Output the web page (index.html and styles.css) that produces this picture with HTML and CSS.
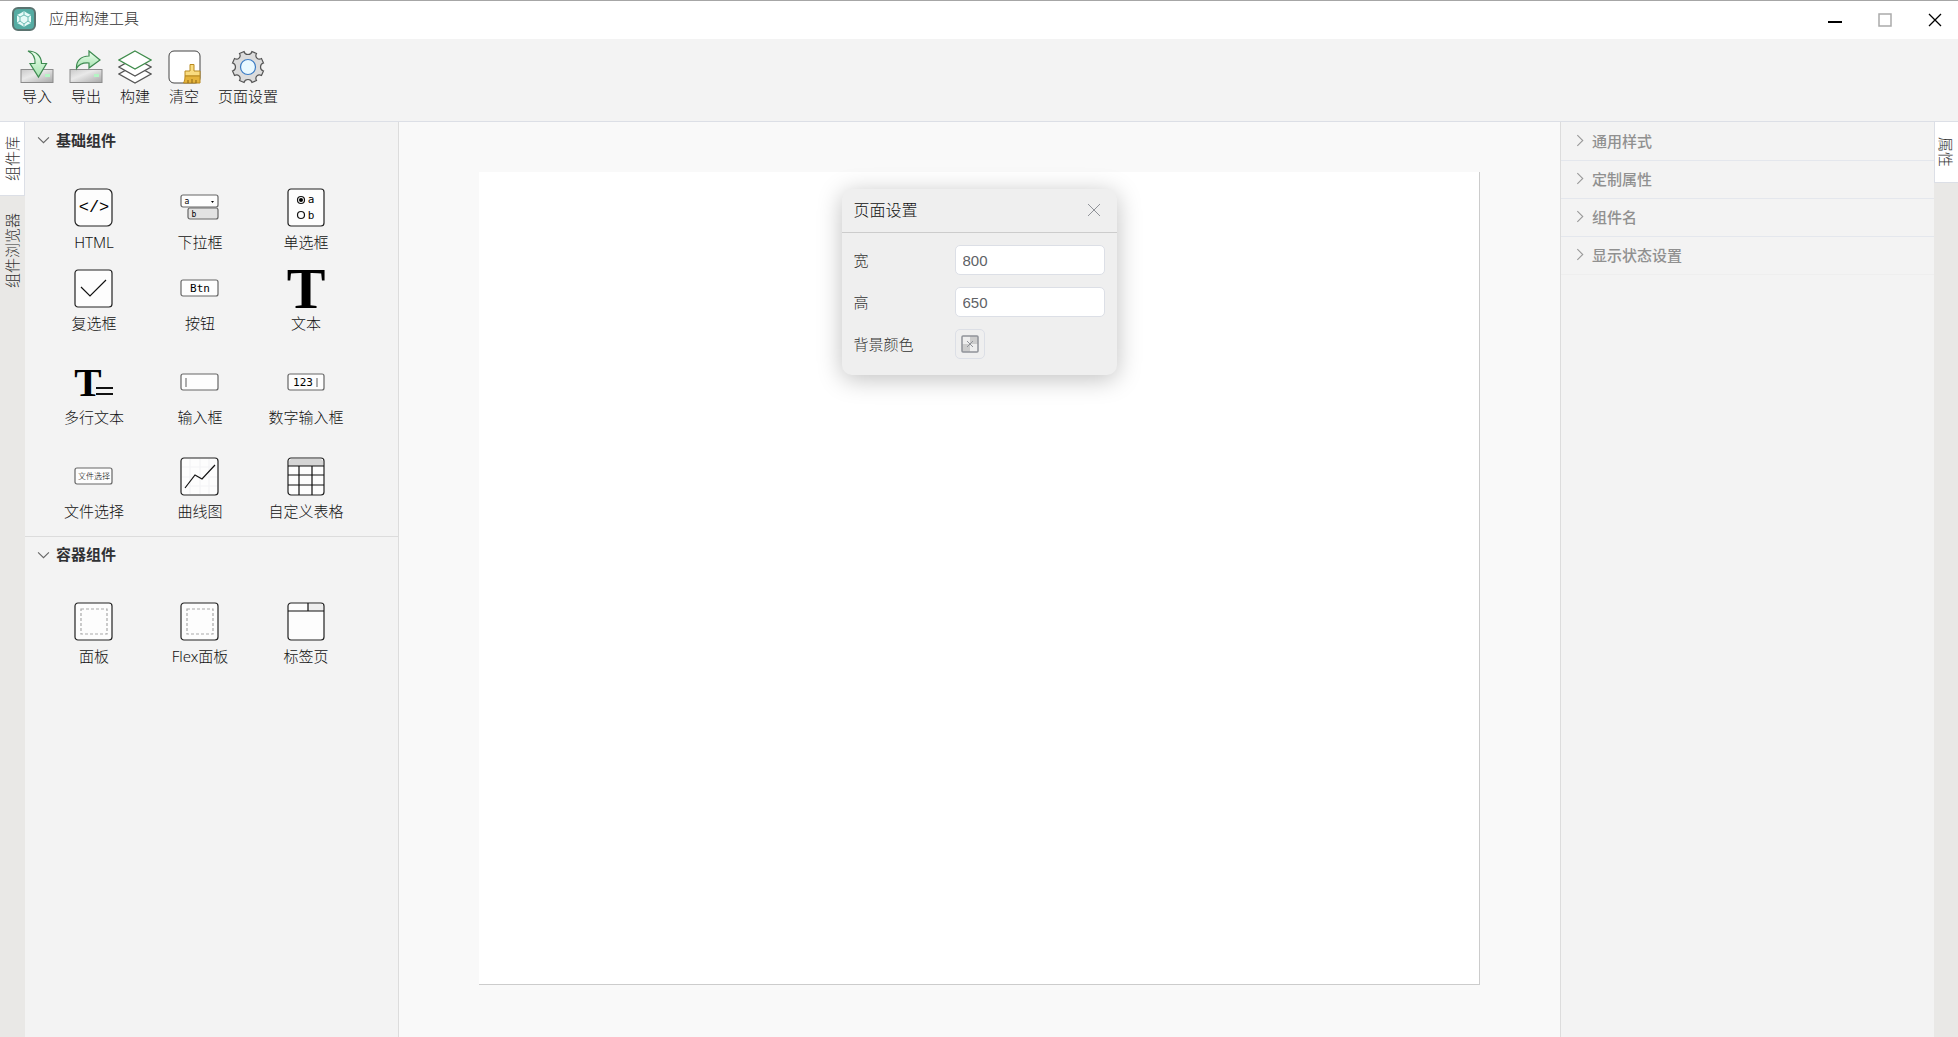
FILE: index.html
```html
<!DOCTYPE html>
<html lang="zh-CN">
<head>
  <meta charset="UTF-8" />
  <meta name="viewport" content="width=device-width, initial-scale=1.0" />
  <title>应用构建工具</title>
  <link rel="stylesheet" href="styles.css">
</head>
<body>

  <header class="title-bar">
    <svg class="logo" viewBox="0 0 24 24">
      <rect x="1" y="1" width="22" height="22" rx="5" fill="#55aca3" stroke="#5b7370" stroke-width="2"/>
      <path d="M12 4l3 2 4 2v8l-4 2-3 2-3-2-4-2V8l4-2z" fill="#e6faf7"/>
      <path d="M12 8l4 2v4l-4 3-4-3v-4zM12 4v4M5 8l3 2M19 8l-3 2M5 16l3-2M19 16l-3-2M12 17v3" fill="none" stroke="#6dbbb3"/>
    </svg>
    <h1 class="app-name">应用构建工具</h1>
    <div class="window-buttons">
      <button type="button" aria-label="最小化"><svg viewBox="0 0 14 14"><path d="M0 9h14" stroke="#000" stroke-width="2"/></svg></button>
      <button type="button" aria-label="最大化"><svg viewBox="0 0 14 14"><path d="M1 1h12v12H1z" fill="none" stroke="#aaa" stroke-width="1.500"/></svg></button>
      <button type="button" aria-label="关闭"><svg viewBox="0 0 14 14"><path d="M1 1l12 12M13 1L1 13" stroke="#000" stroke-width="1.300"/></svg></button>
    </div>
  </header>

  <nav class="toolbar">
    <button type="button" class="tool">
      <svg viewBox="0 0 34 34">
        <defs>
          <linearGradient id="disk" x1="0" y1="0" x2="1" y2="1"><stop offset="0" stop-color="#c9c9c9"/><stop offset=".4" stop-color="#e9e9e9"/><stop offset="1" stop-color="#a8a8a8"/></linearGradient>
          <linearGradient id="leaf" x1="0" y1="0" x2="0" y2="1"><stop offset="0" stop-color="#effff0"/><stop offset="1" stop-color="#a4e3ae"/></linearGradient>
        </defs>
        <rect x="1" y="19.500" width="32" height="13" fill="url(#disk)" stroke="#8b8b8b"/>
        <rect x="25" y="24" width="5" height="3" fill="#b4f5c4"/>
        <path d="M8 1C16 1 21.500 6 21.500 13.500h5L18.500 27l-8.500-13.500h5C15.500 8 13 3.500 8 1z" fill="url(#leaf)" stroke="#3d8a50" stroke-width="1.200"/>
      </svg>
      <span>导入</span>
    </button>
    <button type="button" class="tool">
      <svg viewBox="0 0 34 34">
        <rect x="1" y="19.500" width="32" height="13" fill="url(#disk)" stroke="#8b8b8b"/>
        <rect x="25" y="24" width="5" height="3" fill="#b4f5c4"/>
        <path d="M7.500 18.500C7 11 12 6 20 6V1l11 9-11 8v-5c-6-.5-10 1-12.500 5.500z" fill="url(#leaf)" stroke="#3d8a50" stroke-width="1.200"/>
      </svg>
      <span>导出</span>
    </button>
    <button type="button" class="tool">
      <svg viewBox="0 0 34 34">
        <g fill="#fff" stroke="#555" stroke-width="1.200">
          <path d="M17 15l16 9-16 9-16-9z"/>
          <path d="M17 8l16 9-16 9-16-9z"/>
          <path d="M17 1l16 9-16 9-16-9z" stroke="#3f8c4b"/>
        </g>
      </svg>
      <span>构建</span>
    </button>
    <button type="button" class="tool">
      <svg viewBox="0 0 34 34">
        <rect x="2" y="1" width="31" height="32" rx="5" fill="#fff" stroke="#444"/>
        <path d="M23 14.500h4V21h6v5H18v-5h5z" fill="#f9dc80" stroke="#b98a20"/>
        <path d="M18 26h15v7H16.500c1-2 1.500-4 1.500-7z" fill="#e5b43c" stroke="#b98a20"/>
        <path d="M21 33v-3M25 33v-4M29 33v-3" stroke="#8d6510"/>
      </svg>
      <span>清空</span>
    </button>
    <button type="button" class="tool">
      <svg viewBox="0 0 34 34">
        <path d="M13 1.500c1 4 7 4 8 0l4.500 2c-2 3.500 1.500 7 5 5l2 4.500c-4 1-4 7 0 8l-2 4.500c-3.500-2-7 1.500-5 5l-4.500 2c-1-4-7-4-8 0l-4.500-2c2-3.500-1.500-7-5-5l-2-4.500c4-1 4-7 0-8l2-4.500c3.500 2 7-1.500 5-5z" fill="#dcdcdc" stroke="#555" stroke-width="1.200"/>
        <circle cx="17" cy="17" r="7.500" fill="#eaf9ff" stroke="#3c7cc4" stroke-width="1.200"/>
      </svg>
      <span>页面设置</span>
    </button>
  </nav>

  <main class="workspace">
    <div class="side-tabs side-tabs-left">
      <button type="button" class="side-tab active">组件库</button>
      <button type="button" class="side-tab">组件浏览器</button>
    </div>

    <aside class="library">
      <section class="group">
        <button type="button" class="group-title">
          <svg class="arrow" viewBox="0 0 12 12"><path d="M1 4l5 5 5-5"/></svg>基础组件
        </button>
        <div class="group-items">
          <div class="item">
            <svg viewBox="0 0 40 40"><rect class="box" x="1" y="1" width="37" height="37" rx="5"/><text class="code" x="20" y="24" font-size="17">&lt;/&gt;</text></svg>
            <span>HTML</span>
          </div>
          <div class="item">
            <svg viewBox="0 0 40 40">
              <rect class="box soft" x="1" y="7" width="37" height="12" rx="2"/>
              <rect class="box soft grey" x="8" y="20" width="30" height="11" rx="2"/>
              <text class="mono" x="7" y="16" font-size="8">a</text><text class="mono" x="14" y="29" font-size="8">b</text>
              <path d="M31 13h3l-1.500 2z"/>
            </svg>
            <span>下拉框</span>
          </div>
          <div class="item">
            <svg viewBox="0 0 40 40">
              <rect class="box" x="2" y="1" width="36" height="37" rx="3"/>
              <circle class="line" cx="15" cy="12" r="3.500"/><circle cx="15" cy="12" r="2"/><circle class="line" cx="15" cy="27" r="3.500"/>
              <text class="mono" x="25" y="15" font-size="11">a</text><text class="mono" x="25" y="31" font-size="11">b</text>
            </svg>
            <span>单选框</span>
          </div>
          <div class="item">
            <svg viewBox="0 0 40 40"><rect class="box" x="1" y="1" width="37" height="37" rx="3"/><path class="line" d="M7 18l9 9 16-16"/></svg>
            <span>复选框</span>
          </div>
          <div class="item">
            <svg viewBox="0 0 40 40"><rect class="box soft" x="1" y="11" width="37" height="16" rx="2"/><text class="mono" x="20" y="23" font-size="11">Btn</text></svg>
            <span>按钮</span>
          </div>
          <div class="item">
            <svg viewBox="0 0 40 40"><text class="serif" x="20" y="39" font-size="58">T</text></svg>
            <span>文本</span>
          </div>
          <div class="item">
            <svg viewBox="0 0 40 40"><text class="serif" x="14" y="33" font-size="41">T</text><path class="line thick" d="M22 25h17M22 31h17"/></svg>
            <span>多行文本</span>
          </div>
          <div class="item">
            <svg viewBox="0 0 40 40"><rect class="box soft" x="1" y="11" width="37" height="16" rx="2"/><path class="line caret" d="M6 15v9"/></svg>
            <span>输入框</span>
          </div>
          <div class="item">
            <svg viewBox="0 0 40 40"><rect class="box soft" x="2" y="11" width="36" height="16" rx="2"/><text class="mono" x="17" y="23" font-size="11">123</text><path class="line caret" d="M31 15v9"/></svg>
            <span>数字输入框</span>
          </div>
          <div class="item">
            <svg viewBox="0 0 40 40"><rect class="box soft" x="1" y="11" width="37" height="16" rx="2"/><text class="tiny" x="20" y="22" font-size="8">文件选择</text></svg>
            <span>文件选择</span>
          </div>
          <div class="item">
            <svg viewBox="0 0 40 40"><rect class="box" x="1" y="1" width="37" height="37" rx="3"/><path class="line grid" d="M10 2v35M20 2v35M29 2v35M2 10h35M2 20h35M2 29h35"/><path class="line" d="M5 31l10-13 7 4L35 8"/></svg>
            <span>曲线图</span>
          </div>
          <div class="item">
            <svg viewBox="0 0 40 40"><rect class="box" x="2" y="1" width="36" height="37" rx="3"/><path d="M3 9V4l2-2h30l2 2v5z" fill="#d5d5d5"/><path class="line" d="M2 9h36M2 18h36M2 28h36M13 9v29M26 9v29"/></svg>
            <span>自定义表格</span>
          </div>
        </div>
      </section>

      <section class="group">
        <button type="button" class="group-title">
          <svg class="arrow" viewBox="0 0 12 12"><path d="M1 4l5 5 5-5"/></svg>容器组件
        </button>
        <div class="group-items">
          <div class="item">
            <svg viewBox="0 0 40 40"><rect class="box" x="1" y="1" width="37" height="37" rx="3"/><rect class="line dash" x="7" y="7" width="26" height="25"/></svg>
            <span>面板</span>
          </div>
          <div class="item">
            <svg viewBox="0 0 40 40"><rect class="box" x="1" y="1" width="37" height="37" rx="3"/><rect class="line dash" x="7" y="7" width="26" height="25"/></svg>
            <span>Flex面板</span>
          </div>
          <div class="item">
            <svg viewBox="0 0 40 40"><rect class="box" x="2" y="1" width="36" height="37" rx="3"/><path d="M22 2h14l1 2v5H22z" fill="#eee"/><path class="line" d="M2 9h36M22 1v8"/></svg>
            <span>标签页</span>
          </div>
        </div>
      </section>
    </aside>

    <div class="canvas">
      <div class="board">
        <form class="dialog">
          <div class="dialog-header">
            <h2>页面设置</h2>
            <button type="button" class="close-btn" aria-label="关闭"><svg viewBox="0 0 14 14"><path d="M1 1l12 12M13 1L1 13"/></svg></button>
          </div>
          <div class="dialog-body">
            <div class="field">
              <label for="page-width">宽</label>
              <input type="text" id="page-width" value="800">
            </div>
            <div class="field">
              <label for="page-height">高</label>
              <input type="text" id="page-height" value="650">
            </div>
            <div class="field">
              <label for="page-color">背景颜色</label>
              <button type="button" id="page-color" class="color-btn">
                <svg viewBox="0 0 18 18"><path d="M1 1h16v16H1z" fill="#eee"/><path d="M9 1h8v8H9zM1 9h8v8H1z" fill="#ccc"/><rect x="1" y="1" width="16" height="16" rx="1" fill="none" stroke="#909399" stroke-width="1.500"/><path d="M6 6l6 6M12 6l-6 6" stroke="#909399"/></svg>
              </button>
            </div>
          </div>
        </form>
      </div>
    </div>

    <aside class="properties">
      <button type="button" class="prop-title"><svg class="arrow" viewBox="0 0 12 12"><path d="M4 1l5 5-5 5"/></svg>通用样式</button>
      <button type="button" class="prop-title"><svg class="arrow" viewBox="0 0 12 12"><path d="M4 1l5 5-5 5"/></svg>定制属性</button>
      <button type="button" class="prop-title"><svg class="arrow" viewBox="0 0 12 12"><path d="M4 1l5 5-5 5"/></svg>组件名</button>
      <button type="button" class="prop-title"><svg class="arrow" viewBox="0 0 12 12"><path d="M4 1l5 5-5 5"/></svg>显示状态设置</button>
    </aside>

    <div class="side-tabs side-tabs-right">
      <button type="button" class="side-tab active">属性</button>
    </div>
  </main>

</body>
</html>
```
FILE: styles.css
```css
* {
  box-sizing: border-box;
}
body {
  display: flex;
  flex-direction: column;
  min-height: 100vh;
  margin: 0;
  font-family: "Noto Sans", "Noto Sans CJK SC", sans-serif;
  font-size: 15px;
  font-weight: 300;
  line-height: 20px;
  color: #111;
  background: #f3f3f3;
}
button {
  padding: 0;
  border: none;
  background: none;
  font: inherit;
  color: inherit;
  cursor: pointer;
}
svg {
  display: block;
  flex-shrink: 0;
}
h1,
h2 {
  margin: 0;
  font-size: 15px;
  font-weight: inherit;
}

/* 标题栏 */
.title-bar {
  display: flex;
  align-items: center;
  height: 39px;
  padding-left: 12px;
  border-top: 1px solid #a6a6a6;
  background: #fff;
}
.logo {
  width: 24px;
  height: 24px;
  margin-bottom: 2px;
}
.app-name {
  margin-left: 13px;
  padding-bottom: 4px;
  color: #333;
}
.window-buttons {
  display: flex;
  margin-left: auto;
}
.window-buttons button {
  display: flex;
  align-items: center;
  justify-content: center;
  width: 50px;
  height: 38px;
  padding-left: 4px;
}
.window-buttons svg {
  width: 14px;
  height: 14px;
}

/* 工具栏 */
.toolbar {
  display: flex;
  align-items: flex-start;
  gap: 19px;
  height: 83px;
  padding: 11px 22px 0;
  border-bottom: 1px solid #dcdfe6;
}
.tool {
  display: flex;
  flex-direction: column;
  align-items: center;
  gap: 2px;
}
.tool svg {
  width: 34px;
  height: 34px;
  margin: 0 -2px;
}

/* 工作区 */
.workspace {
  display: flex;
  flex: 1;
}
.side-tabs {
  width: 25px;
  flex-shrink: 0;
  background: #e9e8e6;
}
.side-tabs-right {
  width: 24px;
}
.side-tab {
  display: block;
  width: 100%;
  padding: 14px 0;
  writing-mode: vertical-rl;
  text-orientation: sideways;
  line-height: 24px;
  color: #333;
}
.side-tab + .side-tab {
  margin-top: 3px;
}
.side-tabs-left .side-tab {
  padding-left: 2px;
  transform: rotate(180deg);
}
.side-tabs-right .side-tab {
  padding: 15px 0 15px 2px;
}
.side-tab.active {
  background: #fff;
  border: 1px solid #dcdfe6;
  border-width: 0 0 1px 1px;
}
.side-tabs-left .side-tab.active {
  border-width: 1px 0 0 1px;
}

/* 组件库 */
.library {
  width: 374px;
  flex-shrink: 0;
  border-right: 1px solid #dcdcdc;
}
.group {
  padding-bottom: 15px;
}
.group + .group {
  border-top: 1px solid #dcdcdc;
}
.group-title {
  display: flex;
  align-items: center;
  gap: 6px;
  width: 100%;
  height: 35px;
  padding-left: 12px;
  font-weight: bold;
  color: #303133;
}
.group + .group .group-title {
  height: 34px;
}
.arrow {
  width: 13px;
  height: 13px;
  fill: none;
  stroke: #666;
}
.group-items {
  display: grid;
  grid-template-columns: repeat(3, 106px);
  padding: 14px 16px 0;
}
.item {
  display: flex;
  flex-direction: column;
  align-items: center;
  justify-content: flex-end;
  gap: 4px;
  height: 81px;
}
.item:nth-child(n + 7) {
  height: 94px;
}
.item svg {
  width: 40px;
  height: 40px;
  overflow: visible;
}
.box {
  fill: #fdfdfd;
  stroke: #222;
  stroke-width: 1.2;
}
.soft {
  stroke: #666;
}
.grey {
  fill: #e2e2e2;
}
.line {
  fill: none;
  stroke: #111;
  stroke-width: 1.2;
}
.thick {
  stroke-width: 2;
}
.caret {
  stroke: #777;
}
.grid {
  stroke: #f3f3f6;
}
.dash {
  stroke: #aaa;
  stroke-dasharray: 3 2;
}
.code,
.mono,
.serif,
.tiny {
  text-anchor: middle;
}
.code {
  font-family: "Liberation Mono", monospace;
}
.mono {
  font-family: "DejaVu Sans Mono", monospace;
}
.serif {
  font-family: "Liberation Serif", serif;
  font-weight: bold;
}

/* 画布 */
.canvas {
  flex: 1;
  padding: 50px 80px 52px;
  background: #f9f9f9;
}
.board {
  display: flex;
  justify-content: center;
  align-items: flex-start;
  height: 100%;
  min-height: 813px;
  padding-top: 17px;
  background: #fff;
  border: 1px solid #ccc;
  border-width: 0 1px 1px 0;
}

/* 页面设置 */
.dialog {
  width: 275px;
  background: #efefef;
  border-radius: 10px;
  box-shadow: 0 4px 24px rgba(0, 0, 0, 0.25);
}
.dialog-header {
  display: flex;
  align-items: center;
  justify-content: space-between;
  height: 44px;
  padding: 0 16px 2px 12px;
  border-bottom: 1px solid #ccc;
}
.dialog-header h2 {
  font-size: 16px;
}
.close-btn svg {
  width: 14px;
  height: 14px;
  fill: none;
  stroke: #909399;
}
.dialog-body {
  display: flex;
  flex-direction: column;
  gap: 12px;
  padding: 12px 12px 16px;
}
.field {
  display: flex;
  align-items: center;
  color: #333;
}
.field label {
  width: 101px;
}
.field input {
  flex: 1;
  min-width: 0;
  height: 30px;
  padding: 0 7px;
  border: 1px solid #dcdfe6;
  border-radius: 5px;
  background: #fff;
  font-family: "Liberation Sans", sans-serif;
  font-size: 15px;
  color: #606266;
}
.color-btn {
  display: flex;
  align-items: center;
  justify-content: center;
  width: 30px;
  height: 30px;
  border: 1px solid #dcdfe6;
  border-radius: 5px;
}
.color-btn svg {
  width: 18px;
  height: 18px;
}

/* 属性 */
.properties {
  width: 374px;
  flex-shrink: 0;
  padding-top: 1px;
  border-left: 1px solid #dcdcdc;
}
.prop-title {
  display: flex;
  align-items: center;
  gap: 6px;
  width: 100%;
  height: 38px;
  padding: 0 0 2px 12px;
  border-bottom: 1px solid #e4e7ed;
  font-weight: 500;
  color: #909090;
}
.prop-title:last-child {
  border-bottom-color: #eee;
}
.properties .arrow {
  stroke: #999;
}
```
